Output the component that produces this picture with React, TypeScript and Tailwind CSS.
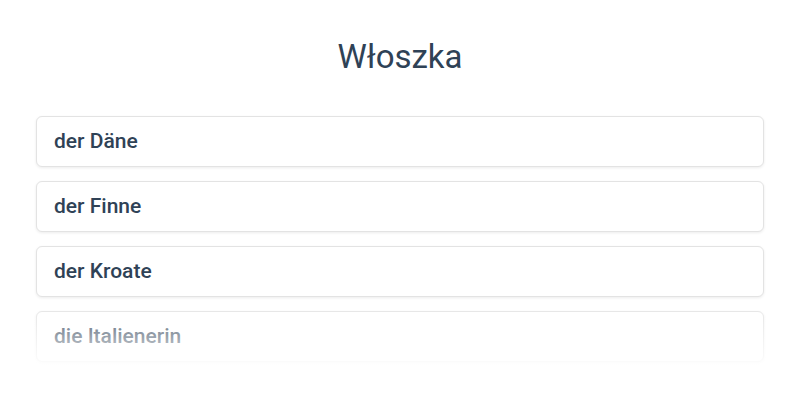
import React from 'react'

const items = ['der Däne', 'der Finne', 'der Kroate', 'die Italienerin']

export default function App() {
  return (
    <div className="w-[800px] h-[400px] bg-white font-['Roboto',sans-serif] text-[#2f4256]">
      <h1 className="pt-[36px] text-center text-[33px] leading-[42px] font-normal">Włoszka</h1>
      <div className="relative mt-[37px] mx-[36px] h-[257px]">
        <div className="flex flex-col gap-[14px] pt-[1px]">
          {items.map((label) => (
            <div
              key={label}
              className="h-[51px] flex items-center px-[17px] pt-[1px] bg-white border border-[#e3e3e3] rounded-[6px] shadow-[0_1px_3px_rgba(0,0,0,0.08)]"
            >
              <span className="text-[21px] font-medium">{label}</span>
            </div>
          ))}
        </div>
        {/* fade out the bottom of the list */}
        <div className="absolute -left-[8px] -right-[8px] bottom-0 h-[72px] bg-gradient-to-b from-white/0 to-white pointer-events-none" />
      </div>
    </div>
  )
}
